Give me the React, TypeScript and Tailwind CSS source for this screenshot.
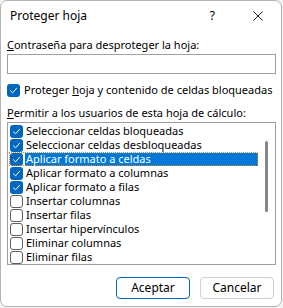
import { useState } from 'react';

type Item = { label: string; checked: boolean };

const ITEMS: Item[] = [
  { label: 'Seleccionar celdas bloqueadas', checked: true },
  { label: 'Seleccionar celdas desbloqueadas', checked: true },
  { label: 'Aplicar formato a celdas', checked: true },
  { label: 'Aplicar formato a columnas', checked: true },
  { label: 'Aplicar formato a filas', checked: true },
  { label: 'Insertar columnas', checked: false },
  { label: 'Insertar filas', checked: false },
  { label: 'Insertar hipervínculos', checked: false },
  { label: 'Eliminar columnas', checked: false },
  { label: 'Eliminar filas', checked: false },
];

function Box({ checked }: { checked: boolean }) {
  if (checked) {
    return (
      <span className="flex h-[13px] w-[13px] shrink-0 items-center justify-center rounded-[3px] bg-[#0067c0]">
        <svg width="9" height="9" viewBox="0 0 9 9" fill="none">
          <path d="M1.5 4.8 L3.6 6.8 L7.6 2.2" stroke="#fff" strokeWidth="1" strokeLinecap="round" strokeLinejoin="round" />
        </svg>
      </span>
    );
  }
  return <span className="block h-[13px] w-[13px] shrink-0 rounded-[3px] border border-[#5f5f5f] bg-white" />;
}

export default function App() {
  const [items, setItems] = useState(ITEMS);
  const [selected, setSelected] = useState(2);

  return (
    <div className="h-[308px] w-[283px] whitespace-nowrap bg-[#f3f3f3] font-['Noto_Sans',sans-serif] text-[11px] leading-[16px] text-black">
      <div className="flex h-[307px] w-[282px] flex-col rounded-[7px] border border-[#b4b4b4] bg-white">
        {/* title bar */}
        <div className="flex h-[30px] items-center pl-[9px] text-[12px]">
          <span className="flex-1">Proteger hoja</span>
          <span className="mr-[38px]">?</span>
          <svg className="mr-[18px]" width="10" height="10" viewBox="0 0 10 10">
            <path d="M0.5 0.5 L9.5 9.5 M9.5 0.5 L0.5 9.5" stroke="#1a1a1a" strokeWidth="1" />
          </svg>
        </div>

        <div className="flex flex-col px-[6px]">
          <div className="mt-[6px]">
            <span className="underline">C</span>ontraseña para desproteger la hoja:
          </div>
          <input
            type="password"
            className="mt-[1px] h-[20px] w-[269px] border border-[#a0a0a0] bg-white px-1 outline-none"
          />

          <div className="mt-[8px] flex h-[16px] items-center gap-[4px]">
            <Box checked />
            <span>
              Proteger <span className="underline">h</span>oja y contenido de celdas bloqueadas
            </span>
          </div>

          <div className="mt-[7px]">
            <span className="underline">P</span>ermitir a los usuarios de esta hoja de cálculo:
          </div>

          <div className="relative mt-[1px] h-[143px] w-[269px] overflow-hidden border border-[#a0a0a0] pt-[1px] pl-[1px]">
            {items.map((it, i) => {
              const sel = i === selected;
              return (
                <div
                  key={it.label}
                  onClick={() => setSelected(i)}
                  className={`flex h-[14px] w-[249px] items-center pl-[1px] ${sel ? 'outline outline-1 outline-dotted outline-[#d08a2a] -outline-offset-1' : ''}`}
                >
                  <span
                    className="flex"
                    onClick={() =>
                      setItems((xs) => xs.map((x, j) => (j === i ? { ...x, checked: !x.checked } : x)))
                    }
                  >
                    <Box checked={it.checked} />
                  </span>
                  <span
                    className={`ml-[2px] flex h-[13px] flex-1 items-center pl-[1px] ${sel ? 'bg-[#0078d7] text-white' : ''}`}
                  >
                    {it.label}
                  </span>
                </div>
              );
            })}
            {/* scroll thumb */}
            <div className="absolute left-[257px] top-[18px] h-[71px] w-[3px] rounded-full bg-[#868686]" />
          </div>

          <div className="mt-[12px] flex justify-end gap-[10px] pr-[1px] text-[12px]">
            <button className="h-[22px] w-[74px] rounded-[4px] border border-[#0067c0] bg-[#fdfdfd]">Aceptar</button>
            <button className="h-[22px] w-[74px] rounded-[4px] border border-[#d0d0d0] bg-[#fdfdfd]">Cancelar</button>
          </div>
        </div>
      </div>
    </div>
  );
}
